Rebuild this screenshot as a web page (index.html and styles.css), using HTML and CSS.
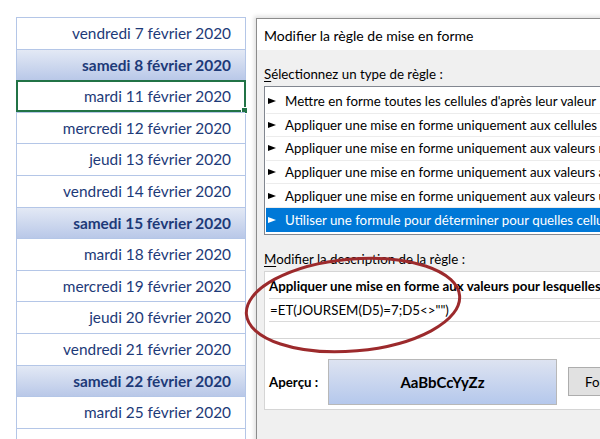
FILE: index.html
```html
<!DOCTYPE html>
<html lang="fr">
<head>
<meta charset="UTF-8">
<title>Mise en forme conditionnelle</title>
<link rel="stylesheet" href="styles.css">
</head>
<body>

<div class="page">
  <div class="sheet">
    <div class="cell">vendredi 7 février 2020</div>
    <div class="cell weekend">samedi 8 février 2020</div>
    <div class="cell active">mardi 11 février 2020<span class="handle"></span></div>
    <div class="cell">mercredi 12 février 2020</div>
    <div class="cell">jeudi 13 février 2020</div>
    <div class="cell">vendredi 14 février 2020</div>
    <div class="cell weekend">samedi 15 février 2020</div>
    <div class="cell">mardi 18 février 2020</div>
    <div class="cell">mercredi 19 février 2020</div>
    <div class="cell">jeudi 20 février 2020</div>
    <div class="cell">vendredi 21 février 2020</div>
    <div class="cell weekend">samedi 22 février 2020</div>
    <div class="cell">mardi 25 février 2020</div>
    <div class="cell">mercredi 26 février 2020</div>
  </div>

  <div class="dialog">
    <div class="dialog-title">Modifier la règle de mise en forme</div>
    <div class="dialog-body">
      <div class="label"><u>S</u>électionnez un type de règle :</div>
      <ul class="rule-list">
        <li><span class="arrow"></span>Mettre en forme toutes les cellules d'après leur valeur</li>
        <li><span class="arrow"></span>Appliquer une mise en forme uniquement aux cellules qui contiennent</li>
        <li><span class="arrow"></span>Appliquer une mise en forme uniquement aux valeurs rangées parmi les premières ou les dernières valeurs</li>
        <li><span class="arrow"></span>Appliquer une mise en forme uniquement aux valeurs au-dessus ou en dessous de la moyenne</li>
        <li><span class="arrow"></span>Appliquer une mise en forme uniquement aux valeurs uniques ou aux doublons</li>
        <li class="selected"><span class="arrow"></span>Utiliser une formule pour déterminer pour quelles cellules le format sera appliqué</li>
      </ul>

      <div class="label desc-label"><u>M</u>odifier la description de la règle :</div>
      <div class="desc-box">
        <div class="desc-top">
          <div class="desc-title">Appliquer une mise en forme aux valeurs pour lesquelles cette formule est vraie :</div>
          <div class="formula">=ET(JOURSEM(D5)=7;D5&lt;&gt;"")</div>
        </div>
        <div class="preview-row">
          <span class="preview-label">Aperçu :</span>
          <div class="preview">AaBbCcYyZz</div>
          <button class="format-btn">Format...</button>
        </div>
      </div>
    </div>
  </div>
</div>

<svg class="circle" width="600" height="439" viewBox="0 0 600 439">
  <ellipse cx="353" cy="305" rx="107" ry="46" transform="rotate(-5 353 305)" fill="none" stroke="#9c2a2c" stroke-width="3"/>
</svg>

</body>
</html>
```

FILE: styles.css
```css
/* page */
html, body {
  margin: 0;
  height: 100%;
  background-color: #ffffff;
  overflow: hidden;
}

body {
  position: relative;
}

.page {
  display: flex;
  align-items: flex-start;
  height: 439px;
  overflow: hidden;
}

/* worksheet column */
.sheet {
  flex: none;
  width: 228px;
  margin: 17px 0 0 16px;
  border-left: 1px solid #b4c6e7;
  border-right: 1px solid #b4c6e7;
  font-family: Lato, "Noto Sans", sans-serif;
  font-size: 15.4px;
  color: #1d3a78;
  white-space: nowrap;
}

.cell {
  position: relative;
  box-sizing: border-box;
  height: 31.6px;
  border-top: 1px solid #b4c6e7;
  padding-right: 14px;
  text-align: right;
  line-height: 30px;
}

.cell.weekend {
  font-weight: bold;
  background: linear-gradient(#e3e9f5, #b9c8e8);
}

.cell.active {
  border: 2px solid #217346;
  margin-left: -1px;
  margin-right: -1px;
  padding-right: 13px;
  line-height: 28px;
}

.handle {
  position: absolute;
  right: -4px;
  bottom: -4px;
  width: 5px;
  height: 5px;
  background-color: #217346;
  border: 1px solid #ffffff;
}

/* dialog */
.dialog {
  flex: none;
  width: 420px;
  height: 460px;
  margin: 18px 0 0 10px;
  border: 1px solid #8c8c8c;
  box-shadow: 0 0 4px 2px rgba(0, 0, 0, 0.12);
  background-color: #f0f0f0;
  font-family: Lato, "Noto Sans", sans-serif;
  font-size: 13.3px;
  color: #000000;
}

.dialog-title {
  height: 31px;
  padding-left: 7px;
  line-height: 33px;
  font-size: 14px;
  background-color: #ffffff;
}

.dialog-body {
  padding: 14px 0 0 7px;
}

.label {
  line-height: 20px;
  margin-bottom: 2px;
}

.label u {
  text-decoration-thickness: 1px;
  text-underline-offset: 2px;
}

.rule-list {
  list-style: none;
  margin: 0;
  padding: 3px 1px 2px;
  border: 1px solid #828790;
  background-color: #ffffff;
  white-space: nowrap;
  overflow: hidden;
}

.rule-list li {
  display: flex;
  align-items: center;
  height: 23.6px;
  padding-left: 2px;
  border-bottom: 1px solid #ececec;
  box-sizing: border-box;
}

.rule-list li:last-child {
  border-bottom: none;
}

.rule-list li.selected {
  background-color: #0078d7;
  color: #ffffff;
}

.arrow {
  flex: none;
  width: 0;
  height: 0;
  margin-right: 9px;
  border-top: 3px solid transparent;
  border-bottom: 3px solid transparent;
  border-left: 8px solid #000000;
}

.selected .arrow {
  border-left-color: #ffffff;
}

.desc-label {
  margin-top: 14px;
}

.desc-box {
  border: 1px solid #d5d5d5;
  background-color: #ffffff;
  white-space: nowrap;
  overflow: hidden;
}

.desc-top {
  height: 67px;
  border-bottom: 1px solid #d5d5d5;
  padding: 4px 0 0 4px;
  box-sizing: border-box;
}

.desc-title {
  font-weight: bold;
  line-height: 20px;
}

.formula {
  margin-top: 2px;
  height: 22px;
  line-height: 22px;
  padding-left: 1px;
  border-top: 1px solid #dadada;
  border-bottom: 1px solid #dadada;
}

.preview-row {
  display: flex;
  align-items: center;
  padding: 20px 0 4px 4px;
}

.preview-label {
  width: 59px;
  font-weight: bold;
}

.preview {
  flex: none;
  box-sizing: border-box;
  width: 229px;
  height: 46px;
  line-height: 44px;
  text-align: center;
  font-weight: bold;
  font-size: 15px;
  border: 1px solid #b8b8b8;
  background: linear-gradient(#dde3f1, #b5c8ec);
}

.format-btn {
  flex: none;
  margin-left: 11px;
  height: 29px;
  padding: 0 16px;
  font-family: Lato, "Noto Sans", sans-serif;
  font-size: 13.3px;
  background-color: #e1e1e1;
  border: 1px solid #adadad;
}

/* red annotation */
.circle {
  position: absolute;
  left: 0;
  top: 0;
  pointer-events: none;
}
```
